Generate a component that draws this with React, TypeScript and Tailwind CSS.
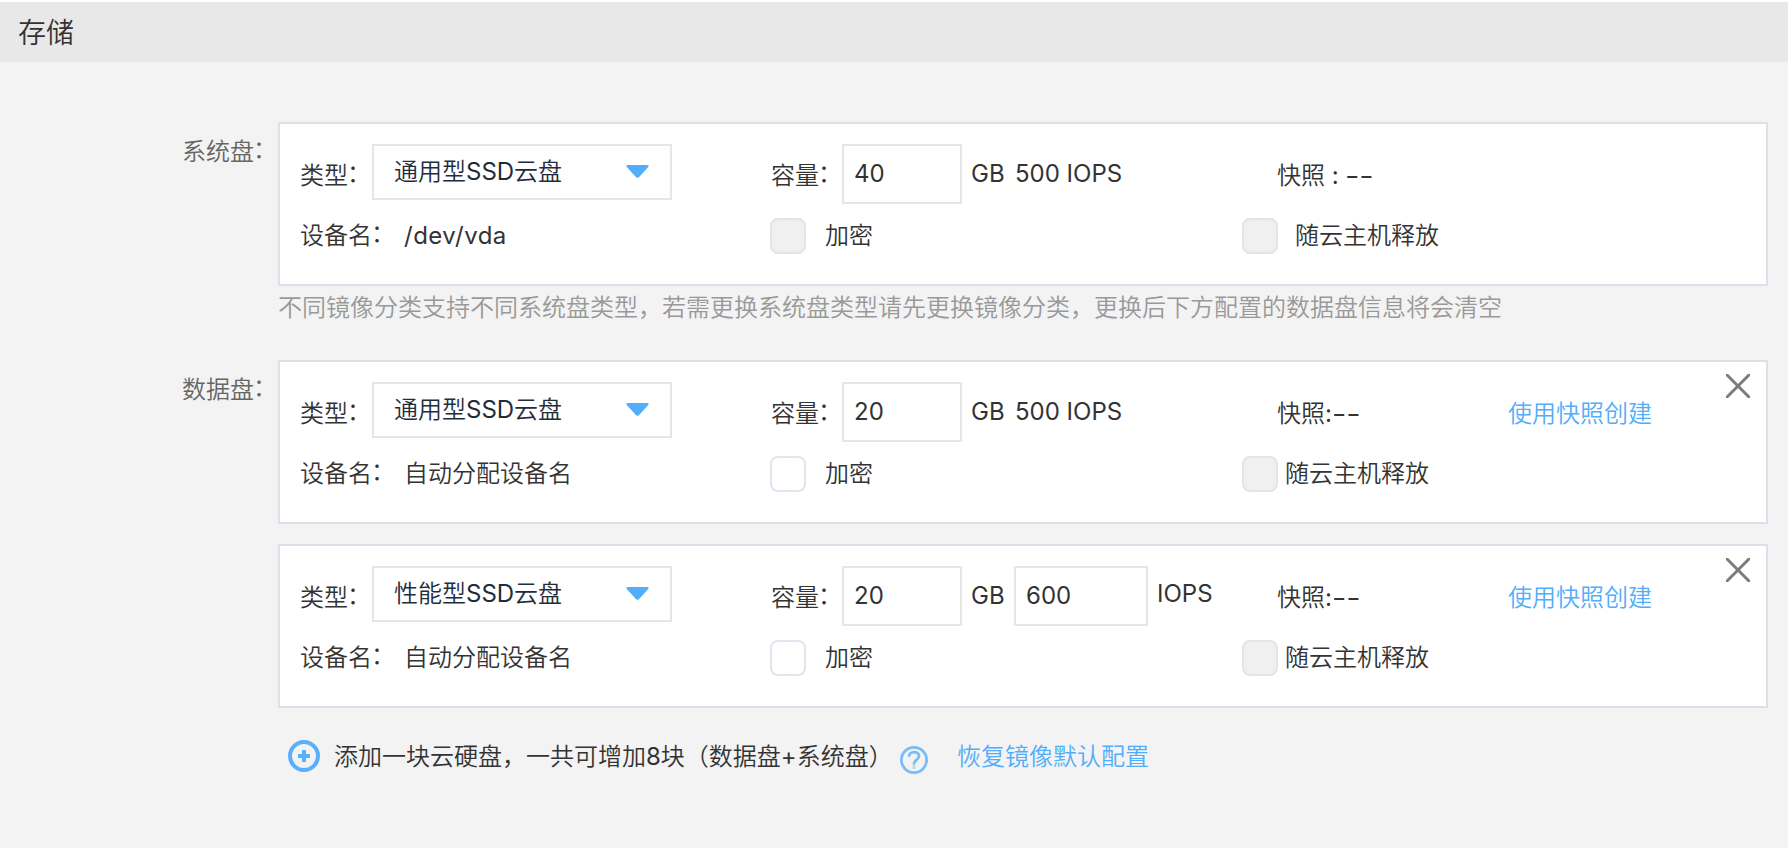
import { ReactNode } from "react";

type Disk = {
  type: string;
  size: string;
  iops?: string;
  device: string;
  system?: boolean;
};

const dataDisks: Disk[] = [
  { type: "通用型SSD云盘", size: "20", device: "自动分配设备名" },
  { type: "性能型SSD云盘", size: "20", iops: "600", device: "自动分配设备名" },
];

function Checkbox({ disabled }: { disabled?: boolean }) {
  return (
    <span
      className={
        disabled
          ? "block size-9 shrink-0 rounded-lg border-2 border-[#e4e4e4] bg-[#f0f0f0]"
          : "block size-9 shrink-0 rounded-lg border-2 border-[#dfe6ee] bg-white"
      }
    />
  );
}

function Field({ value, className }: { value: string; className: string }) {
  return (
    <div className={`flex h-15 shrink-0 items-center border-2 border-[#e6e6e6] bg-white pl-[10px] ${className}`}>
      {value}
    </div>
  );
}

function CloseIcon() {
  return (
    <svg className="absolute top-3 right-4 size-6" viewBox="0 0 24 24" fill="none" stroke="#7c7c7c" strokeWidth="3">
      <path d="M0 0L24 24M24 0L0 24" />
    </svg>
  );
}

function Colon() {
  return <span className="relative -top-0.5 -left-px">：</span>;
}

function DiskCard({ disk }: { disk: Disk }) {
  return (
    <div className="relative h-[164px] w-[1490px] border-2 border-[#dbe1ea] bg-white pt-5 pl-5 leading-6">
      <div className="flex h-15 items-start">
        <div className="flex w-[470px] items-start">
          <span className="w-[72px] pt-5">
            类型
            <Colon />
          </span>
          <div className="flex h-14 w-[300px] items-center justify-between border-2 border-[#e6e6e6] pr-[21px] pl-5 text-[#1f2d3d]">
            <span>{disk.type}</span>
            <svg className="mb-0.5 h-[13px] w-[23px]" viewBox="0 0 23 13" fill="#52adfb">
              <path d="M1.5 0H21.5Q23.6 .6 22 2.2L13.4 11.8Q11.5 13.6 9.6 11.8L1 2.2Q-.6 .6 1.5 0Z" />
            </svg>
          </div>
        </div>
        <div className="flex w-[507px] items-start">
          <span className="w-[72px] pt-5 pl-px whitespace-nowrap">
            容量
            <Colon />
          </span>
          <Field value={disk.size} className="w-[120px]" />
          <span className="w-[43px] pt-[18px] pl-[9px]">GB</span>
          {disk.iops ? (
            <>
              <Field value={disk.iops} className="ml-[9px] w-[134px]" />
              <span className="pt-4 pl-[9px]">IOPS</span>
            </>
          ) : (
            <span className="pt-[18px] pl-[10px]">500 IOPS</span>
          )}
        </div>
        <span className="w-[231px] pt-5 whitespace-pre">
          {disk.system ? "快照 : " : "快照:"}
          <span className="inline-block origin-left scale-x-130">--</span>
        </span>
        {!disk.system && <a className="pt-5 text-[#52adfb]">使用快照创建</a>}
      </div>
      <div className="mt-[14px] flex h-9 items-center">
        <div className="flex w-[470px]">
          <span className="w-[104px]">
            设备名
            <Colon />
          </span>
          <span className={disk.system ? "tracking-[0.5px]" : ""}>{disk.device}</span>
        </div>
        <div className="flex w-[472px] items-center gap-[19px]">
          <Checkbox disabled={disk.system} />
          <span>加密</span>
        </div>
        <div className={`flex items-center ${disk.system ? "gap-[17px]" : "gap-[7px]"}`}>
          <Checkbox disabled />
          <span>随云主机释放</span>
        </div>
      </div>
      {!disk.system && <CloseIcon />}
    </div>
  );
}

function Row({ label, children }: { label: string; children: ReactNode }) {
  return (
    <div className="flex items-start">
      <div className="w-[96px] shrink-0 pt-[18px] leading-6 whitespace-nowrap text-[#666]">
        {label}
        <Colon />
      </div>
      <div>{children}</div>
    </div>
  );
}

export default function App() {
  return (
    <div className="h-[852px] w-[1790px] overflow-hidden bg-white pt-0.5 font-['Inter','Noto_Sans_CJK_SC_DemiLight','Noto_Sans_CJK_SC',sans-serif] text-2xl font-normal text-[#333]">
      <div className="h-[846px] w-[1788px] bg-[#f3f3f3]">
        <header className="flex h-15 items-center bg-[#e8e8e8] pt-1 pl-[18px] text-[28px]">存储</header>
        <main className="pt-15 pl-[182px]">
          <Row label="系统盘">
            <DiskCard disk={{ type: "通用型SSD云盘", size: "40", device: "/dev/vda", system: true }} />
            <p className="h-[74px] pt-[10px] leading-6 text-[#999]">
              不同镜像分类支持不同系统盘类型，若需更换系统盘类型请先更换镜像分类，更换后下方配置的数据盘信息将会清空
            </p>
          </Row>
          <Row label="数据盘">
            <div className="flex flex-col gap-5">
              {dataDisks.map((disk) => (
                <DiskCard key={disk.type} disk={disk} />
              ))}
            </div>
            <div className="mt-8 flex h-8 items-center pl-[10px] leading-6 whitespace-nowrap">
              <svg className="size-8" viewBox="0 0 32 32" fill="none" stroke="#5aaffa" strokeWidth="4">
                <circle cx="16" cy="16" r="14" />
                <path d="M16 10v12M10 16h12" />
              </svg>
              <span className="mt-0.5 ml-[14px] w-[566px]">添加一块云硬盘，一共可增加8块（数据盘+系统盘）</span>
              <svg className="mt-2 size-7" viewBox="0 0 28 28" fill="none" stroke="#78bdf8" strokeWidth="2.8">
                <circle cx="14" cy="14" r="12.6" />
                <path d="M9 10.7C9 4.5 19.1 4.7 19.1 10.1C19.1 13.7 14 13.5 14 18" />
                <path d="M14 18v5" stroke="#b5d9f6" />
              </svg>
              <a className="mt-0.5 ml-[29px] text-[#52adfb]">恢复镜像默认配置</a>
            </div>
          </Row>
        </main>
      </div>
    </div>
  );
}
